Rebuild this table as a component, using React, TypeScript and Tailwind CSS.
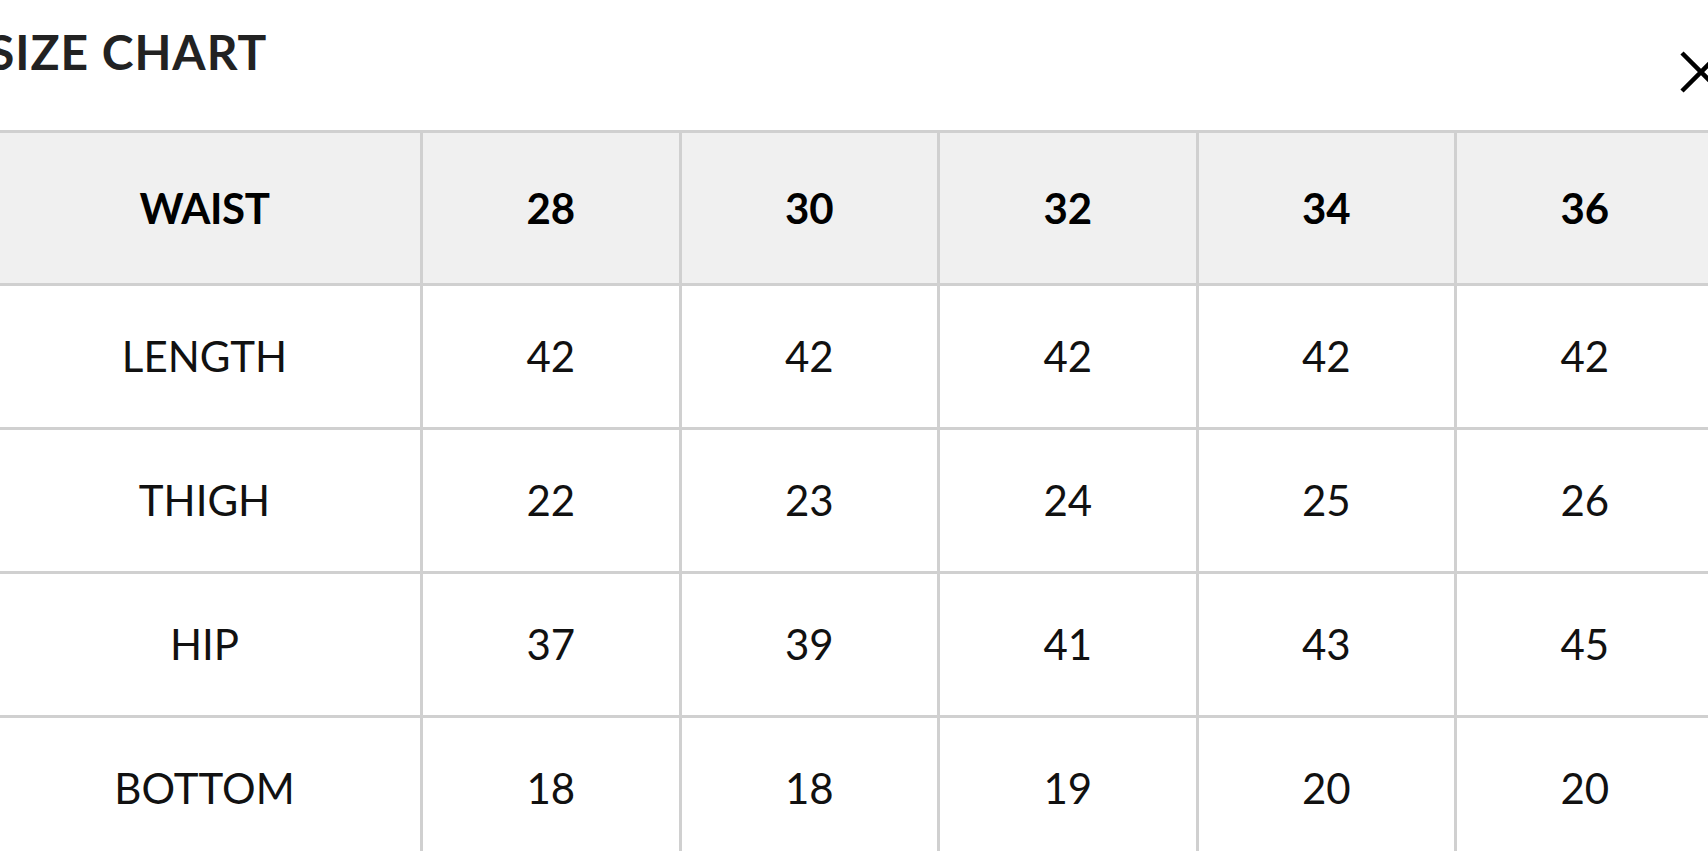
import React from 'react';

const sizes = ['28', '30', '32', '34', '36'];

const rows: { label: string; values: string[] }[] = [
  { label: 'LENGTH', values: ['42', '42', '42', '42', '42'] },
  { label: 'THIGH', values: ['22', '23', '24', '25', '26'] },
  { label: 'HIP', values: ['37', '39', '41', '43', '45'] },
  { label: 'BOTTOM', values: ['18', '18', '19', '20', '20'] },
];

const CloseIcon = () => (
  <svg width="42" height="42" viewBox="0 0 42 42" className="shrink-0 mt-[51px] -mr-[7px]">
    <path d="M2 2 L40 40 M40 2 L2 40" stroke="#000" strokeWidth="4.5" fill="none" />
  </svg>
);

export default function App() {
  return (
    <div className="w-[1708px] h-[851px] overflow-hidden bg-white font-['Lato','Open_Sans',sans-serif]">
      <div className="-ml-[14px] w-[1729px]">
        {/* Header */}
        <div className="flex h-[130px]">
          <h2 className="flex-1 mt-[28px] pl-[2px] text-[48px] leading-[48px] font-bold tracking-[0.02em] text-[#222]">
            SIZE CHART
          </h2>
          <CloseIcon />
        </div>

        {/* Size table */}
        <div className="grid grid-cols-[431px_repeat(5,255.5px)] gap-[3px] p-[3px] bg-[#d0d0d0]">
          <div className="h-[150px] flex items-center justify-center bg-[#f0f0f0] text-[42px] font-bold tracking-[-0.01em] text-black">
            WAIST
          </div>
          {sizes.map((s) => (
            <div
              key={s}
              className="h-[150px] flex items-center justify-center bg-[#f0f0f0] text-[42px] font-bold text-black"
            >
              {s}
            </div>
          ))}
          {rows.map((row) => (
            <React.Fragment key={row.label}>
              <div className="h-[141px] flex items-center justify-center bg-white text-[42px] text-[#111]">
                {row.label}
              </div>
              {row.values.map((v, i) => (
                <div
                  key={i}
                  className="h-[141px] flex items-center justify-center bg-white text-[42px] text-[#111]"
                >
                  {v}
                </div>
              ))}
            </React.Fragment>
          ))}
        </div>
      </div>
    </div>
  );
}
